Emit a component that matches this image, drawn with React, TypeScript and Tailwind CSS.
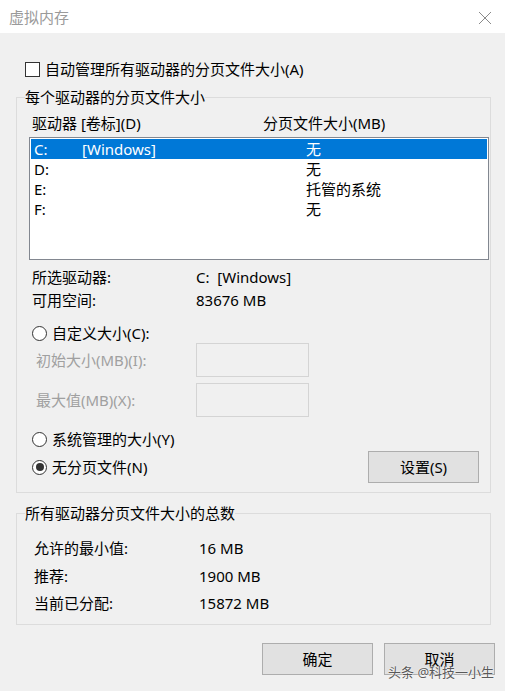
import React from 'react';

const font = { fontFamily: '"Noto Sans", "Noto Sans CJK SC", sans-serif' };

const drives = [
  { letter: 'C:', label: '[Windows]', size: '无', selected: true },
  { letter: 'D:', label: '', size: '无' },
  { letter: 'E:', label: '', size: '托管的系统' },
  { letter: 'F:', label: '', size: '无' },
];

function Radio({ checked, label }: { checked?: boolean; label: string }) {
  return (
    <div className="flex h-[20px] items-center pl-[3px]">
      <span className="flex h-[15px] w-[15px] items-center justify-center rounded-full border border-[#333333] bg-white">
        {checked && <span className="h-[8px] w-[8px] rounded-full bg-[#333333]" />}
      </span>
      <span className="ml-[5px]">{label}</span>
    </div>
  );
}

function Btn({ children }: { children: React.ReactNode }) {
  return (
    <div className="flex h-[32px] w-[111px] items-center justify-center border border-[#adadad] bg-[#e1e1e1]">
      {children}
    </div>
  );
}

export default function App() {
  return (
    <div className="relative h-[691px] w-[505px] overflow-hidden bg-[#f0f0f0] text-[15px] leading-[20px] text-black" style={font}>
      {/* title bar */}
      <div className="flex h-[33px] items-center justify-between bg-white pl-[9px] pr-[13px]">
        <span className="text-[#9a9a9a]">虚拟内存</span>
        <svg width="14" height="14" viewBox="0 0 14 14" className="mt-[2px]">
          <path d="M1 1 L13 13 M13 1 L1 13" stroke="#8a8a8a" strokeWidth="1" fill="none" />
        </svg>
      </div>

      {/* auto manage */}
      <div className="mt-[26px] flex h-[20px] items-center pl-[25px]">
        <span className="h-[15px] w-[15px] border border-[#333333] bg-white" />
        <span className="ml-[5px]">自动管理所有驱动器的分页文件大小(A)</span>
      </div>

      {/* per-drive group */}
      <fieldset className="ml-[16px] mt-[8px] w-[475px] border border-[#dcdcdc] pb-[9px] pl-[12px] pr-[1px]">
        <legend className="-ml-[4px] h-[20px] px-0">每个驱动器的分页文件大小</legend>
        <div className="mt-[6px] flex h-[20px] pl-[3px]">
          <span className="w-[231px]">驱动器 [卷标](D)</span>
          <span>分页文件大小(MB)</span>
        </div>
        <div className="mt-[4px] h-[123px] border border-[#828790] bg-white p-[1px]">
          {drives.map((d) => (
            <div
              key={d.letter}
              className={
                'grid h-[20px] grid-cols-[48px_224px_1fr] items-center pl-[3px] ' +
                (d.selected ? 'bg-[#0078d7] text-white' : '')
              }
            >
              <span>{d.letter}</span>
              <span>{d.label}</span>
              <span>{d.size}</span>
            </div>
          ))}
        </div>

        <div className="mt-[7px] flex flex-col gap-[3px] pl-[3px]">
          <div className="flex h-[20px]">
            <span className="w-[164px]">所选驱动器:</span>
            <span>C:&nbsp;&nbsp;[Windows]</span>
          </div>
          <div className="flex h-[20px]">
            <span className="w-[164px]">可用空间:</span>
            <span>83676 MB</span>
          </div>
        </div>

        <div className="mt-[13px]">
          <Radio label="自定义大小(C):" />
        </div>
        <div className="flex flex-col gap-[6px] pl-[7px] text-[#a0a0a0]">
          <div className="flex h-[34px] items-center">
            <span className="w-[160px]">初始大小(MB)(I):</span>
            <span className="h-[34px] w-[113px] border border-[#d4d4d4]" />
          </div>
          <div className="flex h-[34px] items-center">
            <span className="w-[160px]">最大值(MB)(X):</span>
            <span className="h-[34px] w-[113px] border border-[#d4d4d4]" />
          </div>
        </div>
        <div className="mt-[12px]">
          <Radio label="系统管理的大小(Y)" />
        </div>
        <div className="mt-[2px] flex h-[32px] items-center justify-between pr-[10px]">
          <Radio checked label="无分页文件(N)" />
          <Btn>设置(S)</Btn>
        </div>
      </fieldset>

      {/* totals group */}
      <fieldset className="ml-[16px] mt-[10px] w-[475px] border border-[#dcdcdc] pb-[11px] pl-[17px]">
        <legend className="-ml-[9px] h-[20px] px-0">所有驱动器分页文件大小的总数</legend>
        <div className="mt-[15px] flex flex-col gap-[7.5px]">
          <div className="flex h-[20px]">
            <span className="w-[165px]">允许的最小值:</span>
            <span>16 MB</span>
          </div>
          <div className="flex h-[20px]">
            <span className="w-[165px]">推荐:</span>
            <span>1900 MB</span>
          </div>
          <div className="flex h-[20px]">
            <span className="w-[165px]">当前已分配:</span>
            <span>15872 MB</span>
          </div>
        </div>
      </fieldset>

      <div className="mt-[18px] flex justify-end gap-[11px] pr-[10px]">
        <Btn>确定</Btn>
        <Btn>取消</Btn>
      </div>

      {/* watermark */}
      <div
        className="absolute left-[388px] top-[662px] text-[13px] leading-[20px] text-[#5a5a5a] [text-shadow:0_0_2px_#ffffff,0_0_1px_#ffffff]"
      >
        头条 @科技一小生
      </div>
    </div>
  );
}
